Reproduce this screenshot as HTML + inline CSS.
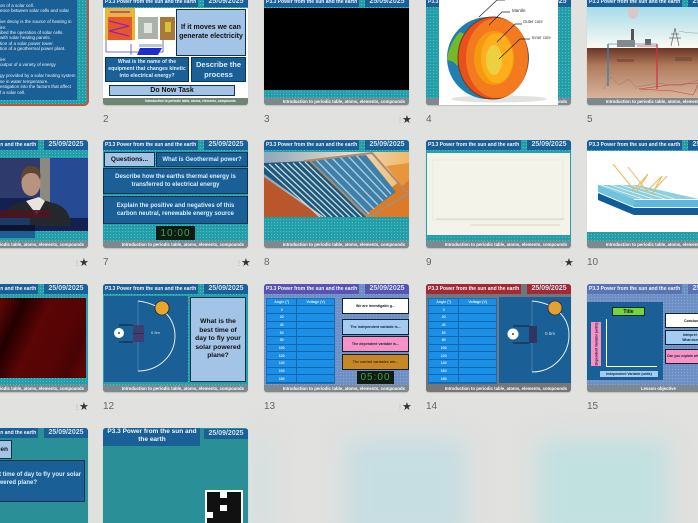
<!DOCTYPE html>
<html><head><meta charset="utf-8"><style>
html,body{margin:0;padding:0;width:698px;height:523px;overflow:hidden;background:#e1e1df;font-family:"Liberation Sans",sans-serif}
#r{position:relative;width:698px;height:523px;overflow:hidden;filter:blur(.3px)}
.s{position:absolute;width:145px;height:108px;background:#25a0ab;background-image:radial-gradient(#52bcc2 0.6px,transparent 0.8px),radial-gradient(#168894 0.6px,transparent 0.8px);background-size:3px 3px,4px 4px;border-radius:3px;overflow:hidden;box-shadow:0 1px 1px rgba(0,0,0,.15)}
.s div,.s svg{position:absolute;box-sizing:border-box}
.h{left:0;top:0;width:95px;height:10px;background:#1b5f97;color:#eef5fb;font-weight:bold;font-size:5px;line-height:10px;padding-left:2px;white-space:nowrap}
.d{left:101px;top:0;width:44px;height:10px;background:#1b5f97;color:#cfe2f2;font-weight:bold;font-size:7px;line-height:10px;text-align:center;white-space:nowrap}
.f{left:0;top:101px;width:145px;height:7px;background:#7f888d;color:#fff;font-weight:bold;font-size:4.3px;line-height:7px;text-align:right;padding-right:4px;white-space:nowrap}
.c{display:flex;align-items:center;justify-content:center;text-align:center;font-weight:bold}
.bl{background:#1b5f97;color:#d9eefa;border:1px solid #0c3350}
.lb{background:#a3c4e6;color:#111;border:1px solid #0c3350}
.c.t{background:#0e1c14;color:#3fa648;font-weight:normal;font-size:10px;letter-spacing:1px}
.n{position:absolute;font-size:10px;color:#666;line-height:12px}
.st{position:absolute;font-size:11px;line-height:12px;color:#333;white-space:nowrap}
.st i{font-style:normal;color:#999;font-size:6px;vertical-align:1px;margin-right:-1px}
.tb{background:#1b8fe6;left:2px;top:14px;width:69px;height:86px;border:1px solid #1b6eb5}
.tb table{position:absolute;left:0;top:0;width:100%;height:100%;border-collapse:collapse;color:#d5ecff;font-size:3.6px;font-weight:bold;text-align:center}
.tb td{border-bottom:1px solid #1266ad;padding:0}
.tb td:first-child{border-right:1px solid #1266ad}
.bb{position:absolute;filter:blur(12px)}
</style></head><body><div id="r">

<div class="bb" style="left:254px;top:436px;width:16px;height:100px;background:#cfdedf"></div>
<div class="bb" style="left:346px;top:440px;width:120px;height:100px;background:#c6dde2"></div>
<div class="bb" style="left:538px;top:440px;width:130px;height:100px;background:#c1e0e0"></div>

<!-- 1 -->
<div class="s" style="left:-57px;top:-3px;outline:2px solid #b9583a;outline-offset:-1px;border-radius:4px">
<div style="left:0;top:0;width:134px;height:103px;background:#1b5f97;color:#e4f0fa;font-size:4.5px;line-height:5.4px;padding:6px 0 0 57px;white-space:nowrap">
on of a solar cell.<br>ence between solar cells and solar<br><br>ive decay is the source of heating in<br>ire:<br>ibed the operation of solar cells.<br>with solar heating panels.<br>tion of a solar power tower.<br>tion of a geothermal power plant.<br><br>ire:<br>output of a variety of energy<br><br>gy provided by a solar heating system<br>se in water temperature.<br>estigation into the factors that affect<br>f a solar cell.
</div>
</div>

<!-- 2 -->
<div class="s" style="left:103px;top:-3px">
<div class="h">P3.3 Power from the sun and the earth</div><div class="d">25/09/2025</div>
<div style="left:0;top:11px;width:145px;height:90px;background:#fff"></div>
<svg style="left:0;top:11px" width="73" height="47" viewBox="0 0 73 47">
<rect x="2" y="0" width="30" height="32" fill="#e8b53a"/><rect x="5" y="9" width="24" height="23" fill="#e8562c"/><path d="M6 13l20 5-20 5 20 5M7 4h20" stroke="#8a2aa8" stroke-width="1.2" fill="none"/><rect x="35" y="9" width="20" height="22" fill="#a9b3a8"/><rect x="41" y="15" width="8" height="10" fill="#dfe5df"/><rect x="57" y="9" width="15" height="23" fill="#a8793a"/><rect x="62" y="14" width="6" height="10" fill="#d8c03c"/><path d="M3 32v12h57v-12M28 36v11" stroke="#5a4ab0" fill="none" stroke-width=".8"/><path d="M34 47l3-7h22l-4 7z" fill="#1d2cd0"/><rect x="36" y="36" width="24" height="3" fill="#b8c8d8"/>
</svg>
<div class="c lb" style="left:73px;top:12px;width:70px;height:47px;font-size:7px;line-height:8.5px;border-width:1.2px">If it moves we can generate electricity</div>
<div class="c bl" style="left:2px;top:60px;width:84px;height:25px;font-size:5.2px;line-height:6.8px">What is the name of the equipment that changes kinetic into electrical energy?</div>
<div class="c bl" style="left:88px;top:60px;width:55px;height:25px;font-size:7.5px;line-height:10px">Describe the process</div>
<div class="c lb" style="left:6px;top:88px;width:126px;height:11px;font-size:7px">Do Now Task</div>
<div class="f" style="background:#6f8573;text-align:center;padding:0 0 0 30px;font-size:3.2px">Introduction to periodic table, atoms, elements, compounds</div>
</div>

<!-- 3 -->
<div class="s" style="left:264px;top:-3px"><div class="h">P3.3 Power from the sun and the earth</div><div class="d">25/09/2025</div>
<div style="left:0;top:11px;width:145px;height:82px;background:#000"></div>
<div class="f">Introduction to periodic table, atoms, elements, compounds</div></div>

<!-- 4 -->
<div class="s" style="left:426px;top:-3px"><div class="h">P3.3 Power from the sun and the earth</div><div class="d">25/09/2025</div>
<div class="f">Introduction to periodic table, atoms, elements, compounds</div>
<div style="left:13px;top:0;width:119px;height:108px;background:#fff"></div>
<svg style="left:13px;top:3px" width="119" height="105" viewBox="0 0 119 105">
<ellipse cx="60" cy="99" rx="48" ry="3.500" fill="#e2e2e0"/>
<circle cx="49" cy="58" r="41" fill="#1f7fb0"/><path d="M21 32c-7 7-12 18-13 28 5 1 8 2 10 6 2-4 3-6 4-9 2-8 3-16 5-22z" fill="#75b82a"/>
<ellipse cx="54" cy="58" rx="35" ry="41" fill="#e8501c" stroke="#7a3a14" stroke-width="1"/>
<ellipse cx="58" cy="58" rx="31" ry="40" fill="#f47a20"/>
<ellipse cx="55" cy="58" rx="20" ry="27" fill="#f59a10"/>
<ellipse cx="58" cy="58" rx="16" ry="25" fill="#fdae1a"/>
<ellipse cx="55" cy="60" rx="8" ry="15" fill="#ecd040"/>
<path d="M40 17L58 0h8M50 25L63 12h8M58 42L76 24h7M60 59L81 39h10" stroke="#222" stroke-width=".7" fill="none"/>
<text x="73" y="12" font-size="4.500" fill="#333" font-family="Liberation Sans">Mantle</text>
<text x="84" y="23" font-size="4.200" fill="#333" font-family="Liberation Sans">Outer core</text>
<text x="93" y="39" font-size="4.200" fill="#333" font-family="Liberation Sans">Inner core</text>
</svg></div>

<!-- 5 -->
<div class="s" style="left:587px;top:-3px"><div class="h">P3.3 Power from the sun and the earth</div><div class="d">25/09/2025</div>
<svg style="left:0;top:10px" width="145" height="91" viewBox="0 0 145 91">
<defs><linearGradient id="g5" x1="0" y1="0" x2="0" y2="1"><stop offset="0" stop-color="#a6dbea"/><stop offset="1" stop-color="#fbfbf4"/></linearGradient><linearGradient id="g5b" x1="0" y1="0" x2="0" y2="1"><stop offset="0" stop-color="#6b3526"/><stop offset=".35" stop-color="#b07a5c"/><stop offset="1" stop-color="#d8b49c"/></linearGradient></defs>
<rect width="145" height="41" fill="url(#g5)"/><rect y="41" width="145" height="50" fill="url(#g5b)"/>
<ellipse cx="46" cy="5" rx="5.500" ry="7" fill="#d7c9c9"/><rect x="44" y="22" width="3" height="17" fill="#555"/><rect x="30" y="33" width="18" height="7" fill="#888"/><rect x="58" y="32" width="6" height="7" fill="#666"/><path d="M84 39l4-18 4 18M84 27h8M82 31h12" stroke="#666" fill="none" stroke-width=".7"/><path d="M92 24q20 5 53-2" stroke="#888" fill="none" stroke-width=".4"/>
<rect x="50" y="38" width="20" height="2" fill="#f0b0b0"/>
<path d="M21 37v42" stroke="#3d7fb0" stroke-width="1.400"/><path d="M21 37h49" stroke="#5099c0" stroke-width=".7"/><path d="M70 37v45" stroke="#d03044" stroke-width="1.200"/>
<path d="M16 82l8-12 8 8 10-6 8 10M50 80l20-4 22 3 20-6-4 12" stroke="#8a7a6e" fill="none" stroke-width=".5"/><path d="M52 82l30-4 30-2-6 12-20-4z" stroke="#c83a40" fill="none" stroke-width=".5"/>
<rect x="30" y="52" width="17" height="3" fill="#6b4a36" opacity=".6"/><rect x="88" y="50" width="17" height="4" fill="#6b4a36" opacity=".6"/>
</svg>
<div class="f">Introduction to periodic table, atoms, elements, compounds</div></div>

<!-- 6 -->
<div class="s" style="left:-57px;top:140px"><div class="h" style="text-align:right;padding-right:3px">P3.3 Power from the sun and the earth</div><div class="d">25/09/2025</div>
<svg style="left:0;top:18px" width="145" height="73" viewBox="0 0 145 73">
<rect width="145" height="73" fill="#141f52"/><rect x="57" width="40" height="40" fill="#2f3a6c"/><rect x="107" width="38" height="60" fill="#274a94"/><rect x="97" width="10" height="50" fill="#8c8a80"/>
<path d="M60 68c0-14 6-22 20-24l14-4 16 5c12 3 17 10 18 23z" fill="#24282c"/><path d="M83 43l11 14 8-14-6-4z" fill="#e8e4e0"/>
<ellipse cx="88" cy="25" rx="9.500" ry="13" fill="#b89480"/><path d="M78 24c-1-13 6-17 11-16 6 0 10 5 8 14-2-6-5-7-9-7s-8 2-10 9z" fill="#5e4632"/>
<rect x="57" y="52" width="50" height="8" fill="#4a1420" opacity=".9"/><rect x="57" y="60" width="30" height="7" fill="#1b3a66"/><rect x="57" y="67" width="35" height="6" fill="#0d1430"/>
</svg>
<div style="left:0;top:91px;width:92px;height:7px;background:#1b5f97"></div>
<div class="f">Introduction to periodic table, atoms, elements, compounds</div></div>

<!-- 7 -->
<div class="s" style="left:103px;top:140px"><div class="h">P3.3 Power from the sun and the earth</div><div class="d">25/09/2025</div>
<div class="c lb" style="left:1px;top:12px;width:51px;height:15px;font-size:6.5px">Questions...</div>
<div class="c bl" style="left:53px;top:12px;width:92px;height:15px;font-size:6px">What is Geothermal power?</div>
<div class="c bl" style="left:0;top:28px;width:145px;height:26px;font-size:6px;line-height:8px;padding:0 6px">Describe how the earths thermal energy is transferred to electrical energy</div>
<div class="c bl" style="left:0;top:56px;width:145px;height:28px;font-size:6px;line-height:8px;padding:0 6px">Explain the positive and negatives of this carbon neutral, renewable energy source</div>
<div class="c t" style="left:53px;top:86px;width:39px;height:14px">10:00</div>
<div class="f">Introduction to periodic table, atoms, elements, compounds</div></div>

<!-- 8 -->
<div class="s" style="left:264px;top:140px"><div class="h">P3.3 Power from the sun and the earth</div><div class="d">25/09/2025</div>
<svg style="left:0;top:12px" width="145" height="65" viewBox="0 0 145 65">
<defs><linearGradient id="g8" x1="0" y1="0" x2="1" y2="0"><stop offset="0" stop-color="#8fa6bd"/><stop offset=".6" stop-color="#ecdcc4"/><stop offset="1" stop-color="#f2b868"/></linearGradient></defs>
<rect width="145" height="65" fill="url(#g8)"/>
<path d="M0 25L58 65H0z" fill="#b9562c"/><path d="M90 65L145 22V65z" fill="#dc7a28"/><path d="M122 14L145 11V28L138 34z" fill="#e8963c"/>
<path d="M0 11L46 9 102 65H60L0 22z" fill="#1f5878"/>
<path d="M0 14L56 65M5 12L62 65M11 12L68 65M17 11L74 65M23 11L80 65M29 11L86 65M35 10L92 65M41 10L98 65" stroke="#c7dbe6" stroke-width="1.300" fill="none"/>
<path d="M46 8L102 3 132 40 102 62z" fill="#3f7fa8"/>
<path d="M52 8L105 62M60 7L110 57M68 6L114 53M76 5L119 49M84 4L123 45M92 3L127 42" stroke="#a7cde0" stroke-width="1.400" fill="none"/>
<path d="M40 9L108 1 144 42 105 65" stroke="#a88d72" stroke-width="2" fill="none"/><path d="M46 9L104 65" stroke="#a88d72" stroke-width="2" fill="none"/>
</svg>
<div class="f">Introduction to periodic table, atoms, elements, compounds</div></div>

<!-- 9 -->
<div class="s" style="left:426px;top:140px"><div class="h">P3.3 Power from the sun and the earth</div><div class="d">25/09/2025</div>
<div style="left:1px;top:13px;width:143px;height:82px;background:#f3f3ea"></div>
<svg style="left:0;top:13px" width="145" height="81" viewBox="0 0 145 81"><rect x="7" y="7" width="130" height="60" fill="none" stroke="#e4e4d8" stroke-width=".6"/><path d="M10 66h128" stroke="#b8b8a4" stroke-width=".6"/><path d="M44 72h90" stroke="#c8c0a0" stroke-width=".6"/></svg>
<div class="f">Introduction to periodic table, atoms, elements, compounds</div></div>

<!-- 10 -->
<div class="s" style="left:587px;top:140px"><div class="h">P3.3 Power from the sun and the earth</div><div class="d">25/09/2025</div>
<svg style="left:0;top:11px" width="145" height="81" viewBox="0 0 145 81">
<rect width="145" height="81" fill="#fff"/>
<path d="M11 34l39 0 62 14H47z" fill="#8ed0dd"/><path d="M14 34l42 14M24 34l42 14M34 34l44 14M44 34l44 14" stroke="#e8f6f8" stroke-width=".7"/>
<path d="M11 34L47 48V56L11 41z" fill="#6fc3dc"/><path d="M11 42L47 57V64L11 49z" fill="#0f5c98"/>
<rect x="47" y="49" width="98" height="7" fill="#60b8e0"/><rect x="47" y="56" width="98" height="1" fill="#e8f6f8"/><rect x="47" y="57" width="98" height="7" fill="#135c99"/>
<path d="M26 13l21 26 14-16-11 17M41 16l19 24 15-15-10 18 3-5 12-13" stroke="#eab85a" stroke-width="1" fill="none"/>
<path d="M145 40h-4v7M141 64v7h4" stroke="#333" stroke-width=".7" fill="none"/>
</svg>
<div class="f">Introduction to periodic table, atoms, elements, compounds</div></div>

<!-- 11 -->
<div class="s" style="left:-57px;top:284px"><div class="h" style="text-align:right;padding-right:3px">P3.3 Power from the sun and the earth</div><div class="d">25/09/2025</div>
<div style="left:0;top:14px;width:143px;height:80px;background:linear-gradient(115deg,#5c0607 34%,#220000 46%,#5a0506 60%,#560405 78%,#480304 88%,#5c0607 96%)"></div>
<div class="f">Introduction to periodic table, atoms, elements, compounds</div></div>

<!-- 12 -->
<div class="s" style="left:103px;top:284px"><div class="h">P3.3 Power from the sun and the earth</div><div class="d">25/09/2025</div>
<svg style="left:1px;top:12px" width="84" height="86" viewBox="0 0 84 86">
<rect width="84" height="86" fill="#1b5f97"/>
<path d="M34 5V75" stroke="#8fb2d0" stroke-width=".4"/><path d="M34 5C58 8 71 22 71 40C71 60 54 75 34 75" stroke="#e4eef6" stroke-width="1" fill="none"/>
<rect x="29" y="29" width="11" height="17" fill="#3c3f70"/><path d="M29 37.500h11" stroke="#222" stroke-width=".5"/>
<path d="M15 29H29M15 46H29" stroke="#111" stroke-width=".7"/>
<circle cx="15" cy="37" r="5" fill="#fff"/><circle cx="15" cy="37" r="1" fill="#444"/>
<circle cx="58" cy="12" r="7" fill="#eaa52e" stroke="#111" stroke-width=".6"/>
<text x="47" y="38" font-size="4" fill="#cfe2f0" font-family="Liberation Sans">0.5m</text>
</svg>
<div class="c lb" style="left:87px;top:13px;width:56px;height:85px;font-size:6.700px;line-height:8.600px;padding:0 2px">What is the best time of day to fly your solar powered plane?</div>
<div class="f">Introduction to periodic table, atoms, elements, compounds</div></div>

<!-- 13 -->
<div class="s" style="left:264px;top:284px;background:#6d8fc4;background-image:radial-gradient(#88a6d2 0.6px,transparent 0.8px);background-size:3px 3px"><div class="h" style="background:#5a53b4">P3.3 Power from the sun and the earth</div><div class="d" style="background:#5a53b4">25/09/2025</div>
<div class="tb"><table><tr><td>Angle (°)</td><td>Voltage (V)</td></tr><tr><td>0</td><td></td></tr><tr><td>20</td><td></td></tr><tr><td>40</td><td></td></tr><tr><td>60</td><td></td></tr><tr><td>80</td><td></td></tr><tr><td>100</td><td></td></tr><tr><td>120</td><td></td></tr><tr><td>140</td><td></td></tr><tr><td>160</td><td></td></tr><tr><td>180</td><td></td></tr></table></div>
<div class="c" style="left:78px;top:14px;width:67px;height:16px;background:#fff;border:1px solid #123;font-size:3.600px;color:#111">We are investigatin g...</div>
<div class="c" style="left:78px;top:35px;width:67px;height:16px;background:#a3ccf2;border:1px solid #123;font-size:3.600px;color:#123">The independent variable is...</div>
<div class="c" style="left:78px;top:52px;width:67px;height:16px;background:#f792c7;border:1px solid #123;font-size:3.600px;color:#123">The dependent variable is...</div>
<div class="c" style="left:78px;top:70px;width:67px;height:16px;background:#c98626;border:1px solid #123;font-size:3.600px;color:#332">The control variables are...</div>
<div class="c t" style="left:93px;top:87px;width:37px;height:13px">05:00</div>
<div class="f">Introduction to periodic table, atoms, elements, compounds</div></div>

<!-- 14 -->
<div class="s" style="left:426px;top:284px;background:#6f7780;background-image:none"><div class="h" style="background:#a32a34">P3.3 Power from the sun and the earth</div><div class="d" style="background:#a32a34">25/09/2025</div>
<div class="tb"><table><tr><td>Angle (°)</td><td>Voltage (V)</td></tr><tr><td>0</td><td></td></tr><tr><td>20</td><td></td></tr><tr><td>40</td><td></td></tr><tr><td>60</td><td></td></tr><tr><td>80</td><td></td></tr><tr><td>100</td><td></td></tr><tr><td>120</td><td></td></tr><tr><td>140</td><td></td></tr><tr><td>160</td><td></td></tr><tr><td>180</td><td></td></tr></table></div>
<svg style="left:73px;top:13px" width="72" height="86" viewBox="0 0 72 86">
<rect width="72" height="86" fill="#1b5f97"/>
<path d="M33 4V75" stroke="#8fb2d0" stroke-width=".4"/><path d="M33 4C56 6 70 20 70 38C70 58 54 75 33 75" stroke="#e4eef6" stroke-width="1" fill="none"/>
<rect x="30" y="29" width="8" height="17" fill="#2f3565"/>
<path d="M14 29H30M14 46H30" stroke="#111" stroke-width=".7"/>
<circle cx="14" cy="37" r="5.500" fill="#fff"/><circle cx="14" cy="37" r="1" fill="#444"/>
<circle cx="56" cy="11" r="7" fill="#e2a035" stroke="#111" stroke-width=".6"/>
<text x="46" y="38" font-size="4.500" fill="#cfe2f0" font-family="Liberation Sans">0.5m</text>
</svg>
<div class="f" style="background:#767676">Introduction to periodic table, atoms, elements, compounds</div></div>

<!-- 15 -->
<div class="s" style="left:587px;top:284px;background:#6d8fc4;background-image:radial-gradient(#88a6d2 0.6px,transparent 0.8px);background-size:3px 3px"><div class="h" style="background:#5a73b4">P3.3 Power from the sun and the earth</div><div class="d" style="background:#5a73b4">25/09/2025</div>
<div style="left:0;top:18px;width:76px;height:78px;background:#1b5f97"></div>
<div class="c" style="left:25px;top:23px;width:33px;height:9px;background:#6fd63c;border:1px solid #123;font-size:5px;color:#111">Title</div>
<div style="left:19px;top:35px;width:1px;height:47px;background:#fff"></div>
<div style="left:19px;top:82px;width:51px;height:1px;background:#fff"></div>
<div class="c" style="left:4px;top:38px;width:10px;height:44px;background:#f792c7;font-size:3.400px;color:#123"><span style="transform:rotate(-90deg);white-space:nowrap">Dependent Variable (units)</span></div>
<div class="c" style="left:13px;top:87px;width:58px;height:6px;background:#a3ccf2;font-size:3.400px;color:#123;white-space:nowrap">Independent Variable (units)</div>
<div class="c" style="left:78px;top:29px;width:67px;height:15px;background:#fff;border:1px solid #123;font-size:3.600px;color:#111;justify-content:flex-start;padding-left:18px;white-space:nowrap">Conclusion</div>
<div class="c" style="left:78px;top:46px;width:67px;height:15px;background:#a3ccf2;border:1px solid #123;font-size:3.400px;line-height:4.400px;color:#123">Interpret your data:<br>What does the trend</div>
<div class="c" style="left:78px;top:65px;width:67px;height:15px;background:#f792c7;border:1px solid #123;font-size:3.400px;line-height:4.400px;color:#123;white-space:nowrap;justify-content:flex-start">&nbsp;Can you explain why this</div>
<div class="f" style="text-align:left;padding-left:54px">Lesson objective</div></div>

<!-- 16 -->
<div class="s" style="left:-57px;top:428px;background:#2a8f97"><div class="h" style="text-align:right;padding-right:3px">P3.3 Power from the sun and the earth</div><div class="d">25/09/2025</div>
<div class="c lb" style="left:40px;top:12px;width:29px;height:19px;font-size:6.500px;justify-content:flex-end;padding-right:3px">en</div>
<div class="bl" style="left:20px;top:32px;width:122px;height:42px"></div>
<div style="left:0;top:43px;width:138px;height:8px;font-size:6px;line-height:8px;font-weight:bold;color:#d9eefa;text-align:right;white-space:nowrap">What is the best time of day to fly your solar</div>
<div style="left:0;top:51px;width:94px;height:8px;font-size:6px;line-height:8px;font-weight:bold;color:#d9eefa;text-align:right;white-space:nowrap">powered plane?</div>
</div>

<!-- 17 -->
<div class="s" style="left:103px;top:428px;background:#2a8f97;height:95px;border-radius:3px 3px 0 0">
<div class="h" style="width:97px;height:18px;white-space:normal;font-size:6.500px;line-height:8px;text-align:center;padding:0 0 0 1px">P3.3 Power from the sun and the earth</div><div class="d" style="top:1px">25/09/2025</div>
<div style="left:102px;top:62px;width:38px;height:41px;background:#fff"></div>
<div style="left:104px;top:64px;width:34px;height:39px;background:#111"></div>
<div style="left:117px;top:64px;width:7px;height:6px;background:#fff"></div>
<div style="left:117px;top:77px;width:7px;height:6px;background:#fff"></div>
<div style="left:102px;top:84px;width:8px;height:6px;background:#fff"></div>
</div>

<!-- labels -->
<div class="n" style="left:103px;top:114px">2</div><div class="n" style="left:264px;top:114px">3</div><div class="n" style="left:426px;top:114px">4</div><div class="n" style="left:587px;top:114px">5</div>
<div class="n" style="left:103px;top:257px">7</div><div class="n" style="left:264px;top:257px">8</div><div class="n" style="left:426px;top:257px">9</div><div class="n" style="left:587px;top:257px">10</div>
<div class="n" style="left:103px;top:401px">12</div><div class="n" style="left:264px;top:401px">13</div><div class="n" style="left:426px;top:401px">14</div><div class="n" style="left:587px;top:401px">15</div>

<div class="st" style="left:397px;top:114px"><i>⋮</i>★</div>
<div class="st" style="left:74px;top:257px"><i>⋮</i>★</div>
<div class="st" style="left:236px;top:257px"><i>⋮</i>★</div>
<div class="st" style="left:559px;top:257px"><i>⋮</i>★</div>
<div class="st" style="left:74px;top:401px"><i>⋮</i>★</div>
<div class="st" style="left:397px;top:401px"><i>⋮</i>★</div>
</div></body></html>
